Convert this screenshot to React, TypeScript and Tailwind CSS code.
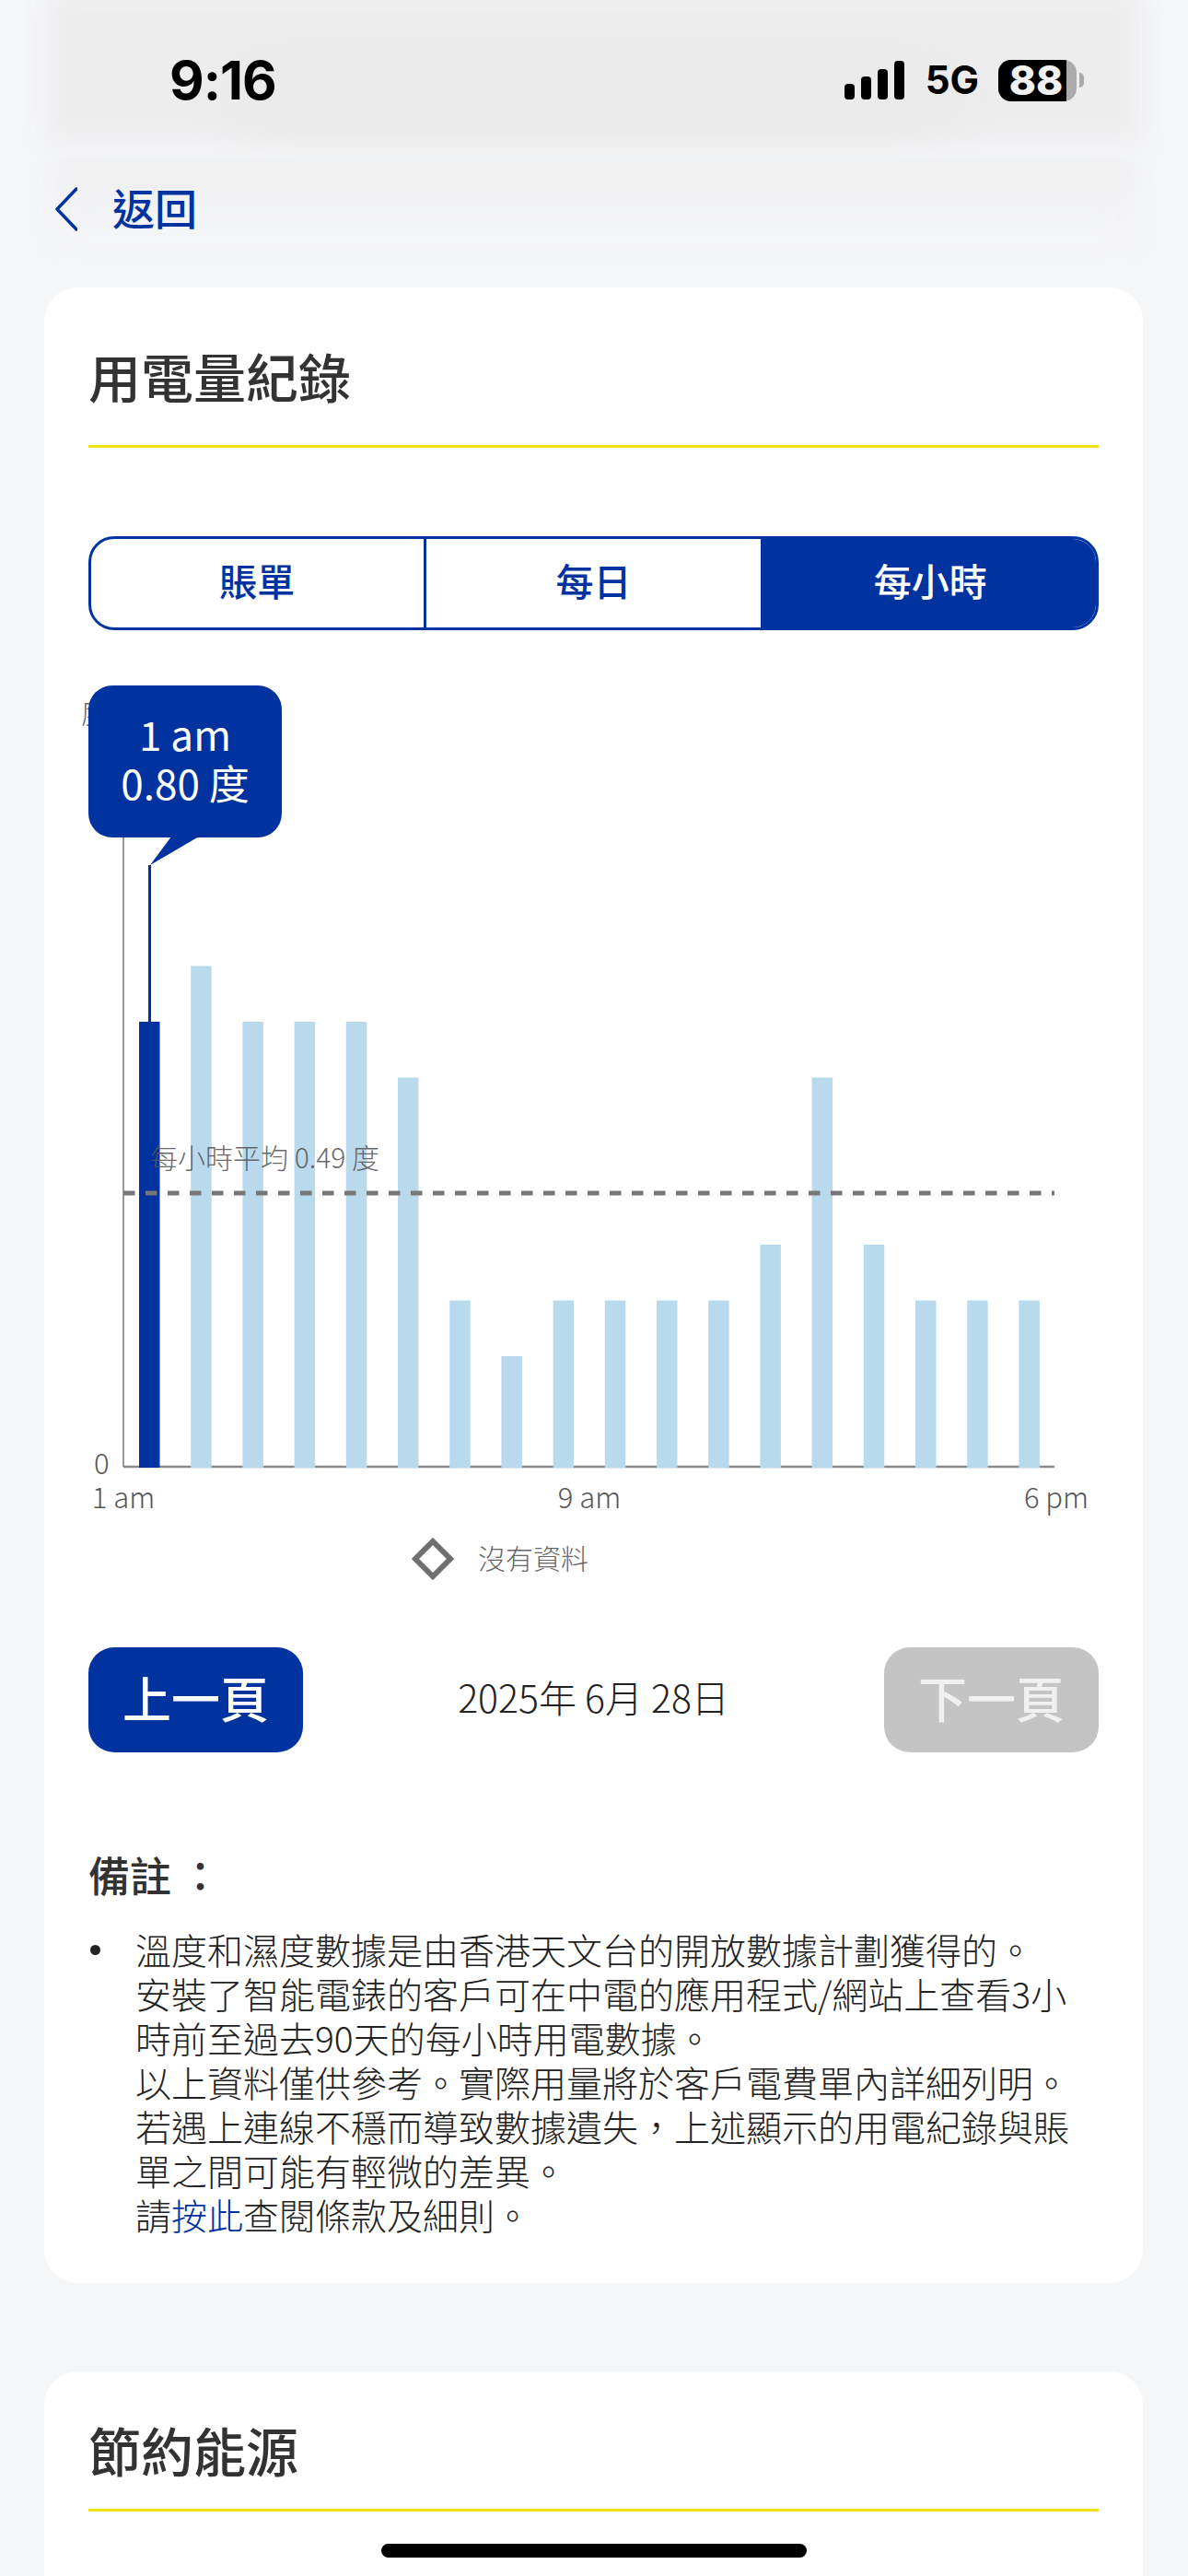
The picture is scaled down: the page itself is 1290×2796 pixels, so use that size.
const font = "font-['Noto_Sans_CJK_TC','Noto_Sans',sans-serif]"

const values = [0.8, 0.9, 0.8, 0.8, 0.8, 0.7, 0.3, 0.2, 0.3, 0.3, 0.3, 0.3, 0.4, 0.7, 0.4, 0.3, 0.3, 0.3]

function StatusBar() {
  return (
    <div className="relative h-[170px] overflow-hidden">
      {/* blurred system bar backdrop */}
      <div className="absolute left-[50px] right-[50px] -top-[10px] bottom-[14px] bg-[#ededee] blur-[14px]" />
      <div className="absolute left-[260px] right-[260px] top-[70px] bottom-[30px] bg-[#e9e9ea] blur-[24px]" />
      <div className="relative h-full pt-1 pl-[184px] pr-[113px] flex items-center justify-between">
        <span className="font-['Inter',sans-serif] font-bold text-[58px] leading-none tracking-[-1px] text-black">9:16</span>
        <div className="flex items-center">
          <svg width="66" height="42" viewBox="0 0 66 42" className="mr-[22px]">
            <rect x="0" y="25" width="11" height="17" rx="4" fill="#000" />
            <rect x="18" y="17" width="11" height="25" rx="4" fill="#000" />
            <rect x="36" y="9" width="11" height="33" rx="4" fill="#000" />
            <rect x="54" y="0" width="11" height="42" rx="4" fill="#000" />
          </svg>
          <span className="font-['Inter',sans-serif] font-bold text-[42px] leading-none text-black mr-[21px]">5G</span>
          <div className="flex items-center">
            <div className="w-[85px] h-[45px] rounded-[14px] bg-[#ababab] overflow-hidden">
              <div className="w-[74px] h-full bg-black flex items-center justify-center pl-[8px]">
                <span className="font-['Inter',sans-serif] font-extrabold text-[44px] leading-none text-[#f2f2f2]">88</span>
              </div>
            </div>
            <div className="w-[5px] h-[16px] ml-[3px] rounded-r-full bg-[#ababab]" />
          </div>
        </div>
      </div>
    </div>
  )
}

function Chart() {
  return (
    <div className="relative mt-[60px] h-[906px]">
      <svg width="1098" height="906" viewBox="0 0 1098 906" className={"block overflow-visible font-light " + font}>
        <text x="-8" y="41" fontSize="30" fill="#666">度</text>
        <line x1="38" y1="160" x2="38" y2="848" stroke="#999" strokeWidth="2" />
        <line x1="38" y1="848" x2="1049" y2="848" stroke="#8a8a8a" strokeWidth="2.5" />
        {values.map((v, i) => (
          <rect
            key={i}
            x={55 + i * 56.2}
            y={849 - v * 605}
            width="22.5"
            height={v * 605}
            fill={i === 0 ? "#0033a0" : "#b9daed"}
          />
        ))}
        <line x1="66.5" y1="195" x2="66.5" y2="365" stroke="#0033a0" strokeWidth="3" />
        <line x1="38" y1="551" x2="1049" y2="551" stroke="#777" strokeWidth="5" strokeDasharray="12.5 11.5" />
        <text x="67" y="524" fontSize="30" fill="#555" fillOpacity="0.9">每小時平均 0.49 度</text>
        <text x="6" y="856" fontSize="31" fill="#555">0</text>
        <text x="38" y="893" fontSize="31" fill="#555" textAnchor="middle">1 am</text>
        <text x="544" y="893" fontSize="31" fill="#555" textAnchor="middle">9 am</text>
        <text x="1051" y="893" fontSize="31" fill="#555" textAnchor="middle">6 pm</text>
      </svg>
      <div className="absolute left-0 top-0 w-[210px] h-[165px] rounded-[26px] bg-[#0033a0] flex flex-col items-center justify-center text-white text-[44px] leading-[53px] pb-[7px]">
        <span>1 am</span>
        <span>0.80 度</span>
      </div>
      <svg width="60" height="32" viewBox="0 0 60 32" className="absolute left-[64px] top-[164px]">
        <polygon points="26,0 56,0 3,31" fill="#0033a0" />
      </svg>
    </div>
  )
}

function Pager() {
  return (
    <div className="mt-[73px] h-[114px] flex items-center justify-between">
      <button className="w-[233px] h-full pb-[5px] rounded-[28px] bg-[#0033a0] text-white text-[53px] font-medium">上一頁</button>
      <span className="pb-[6px] text-[41px] font-light text-[#222]">2025年 6月 28日</span>
      <button className="w-[233px] h-full pb-[5px] rounded-[28px] bg-[#c4c4c4] text-[#f0f0f0] text-[53px] font-medium">下一頁</button>
    </div>
  )
}

export default function App() {
  return (
    <div className={"relative h-[2796px] overflow-hidden bg-[#f5f6f8] " + font}>
      <StatusBar />
      <div className="relative h-[116px] pl-[60px] pb-[2px] flex items-center gap-[38px] overflow-hidden">
        <div className="absolute left-[60px] right-[60px] top-0 h-[100px] bg-gradient-to-b from-[#eeeeef] to-[#f5f6f8] blur-[14px]" />
        <svg width="24" height="48" viewBox="0 0 24 48" fill="none" stroke="#0033a0" strokeWidth="3.5" strokeLinecap="round" strokeLinejoin="round" className="relative">
          <polyline points="23,2 2,24 23,46" />
        </svg>
        <span className="relative pb-[5px] text-[46px] font-medium text-[#0033a0]">返回</span>
      </div>

      <div className="mt-[26px] mx-[48px] w-[1193px] bg-white rounded-[36px] px-[48px] pb-[51px]">
        <div className="pt-[21px] h-[174px] flex items-center border-b-[3px] border-[#f0e414]">
          <h1 className="text-[57px] font-medium text-[#333]">用電量紀錄</h1>
        </div>

        <div className="mt-[96px] h-[102px] grid grid-cols-3 rounded-[28px] border-[3px] border-[#0033a0] overflow-hidden text-[41px] font-medium text-[#0033a0]">
          <div className="pb-[6px] flex items-center justify-center border-r-[3px] border-[#0033a0]">賬單</div>
          <div className="pb-[6px] flex items-center justify-center">每日</div>
          <div className="pb-[6px] pl-[4px] flex items-center justify-center bg-[#0033a0] text-white">每小時</div>
        </div>

        <Chart />

        <div className="mt-[19px] h-[46px] pl-[351px] flex items-center gap-[26px]">
          <svg width="46" height="46" viewBox="0 0 46 46" fill="none" stroke="#6f6f6f" strokeWidth="6">
            <polygon points="23,4 42,23 23,42 4,23" />
          </svg>
          <span className="pb-[4px] text-[30px] font-light text-[#666]">沒有資料</span>
        </div>

        <Pager />

        <h2 className="mt-[103px] h-[60px] flex items-center text-[45px] font-medium text-[#333]">
          備註<span className="ml-[9px]">：</span>
        </h2>
        <ul className="mt-[26px] flex">
          <li className="flex text-[39px] font-light leading-[48px] text-[#222]">
            <span className="w-[51px] shrink-0 flex pt-[20px] pl-[2px]">
              <span className="w-[11px] h-[11px] rounded-full bg-[#222]" />
            </span>
            <span className="w-[1030px]">
              溫度和濕度數據是由香港天文台的開放數據計劃獲得的。<br />
              安裝了智能電錶的客戶可在中電的應用程式/網站上查看3小時前至過去90天的每小時用電數據。<br />
              以上資料僅供參考。實際用量將於客戶電費單內詳細列明。<br />
              若遇上連線不穩而導致數據遺失，上述顯示的用電紀錄與賬單之間可能有輕微的差異。<br />
              請<a className="text-[#0033a0]">按此</a>查閱條款及細則。
            </span>
          </li>
        </ul>
      </div>

      <div className="mt-[96px] mx-[48px] w-[1193px] min-h-[400px] bg-white rounded-[36px] px-[48px]">
        <div className="pt-[20px] h-[152px] flex items-center border-b-[3px] border-[#f0e414]">
          <h1 className="text-[57px] font-medium text-[#333]">節約能源</h1>
        </div>
      </div>

      <div className="absolute left-[414px] top-[2761px] w-[462px] h-[15px] rounded-full bg-black" />
    </div>
  )
}
